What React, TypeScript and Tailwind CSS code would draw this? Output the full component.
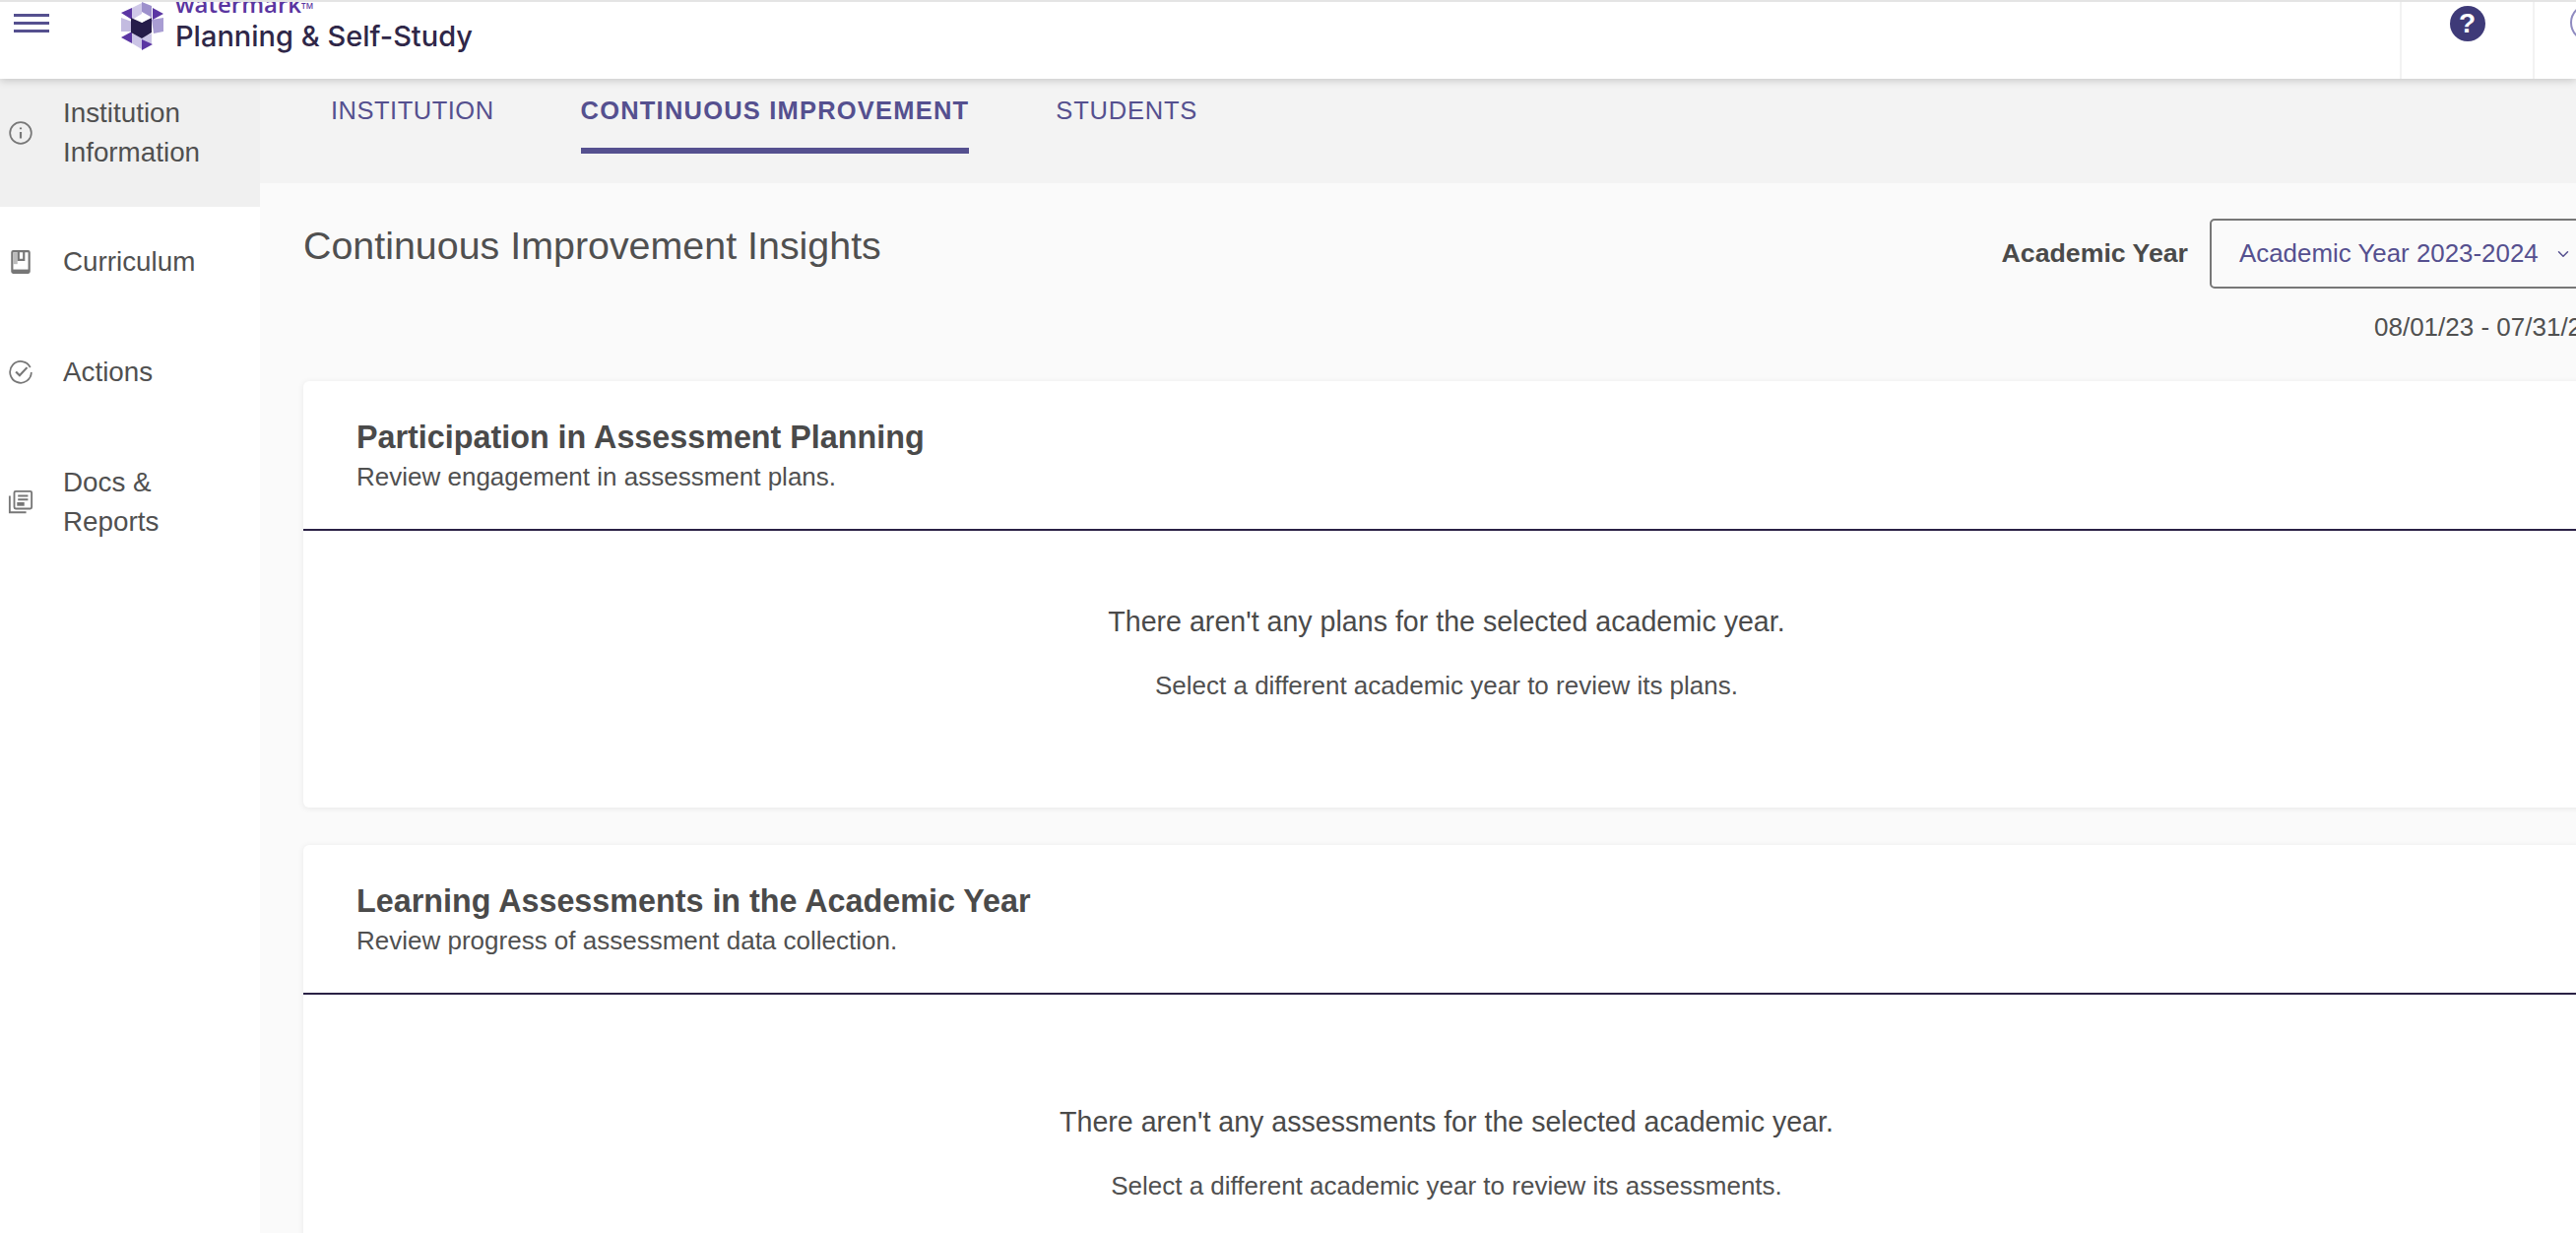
import { ChevronDown } from "lucide-react";

const font = "font-['Liberation_Sans',Arial,sans-serif]";

const Logo = () => (
  <svg viewBox="0 0 56 56" className="w-[56px] h-[56px]">
    <polygon points="28,2 38,6 38,18 28,14" fill="#9d90cc" />
    <polygon points="18,8 28,3 28,14 18,20" fill="#cfc8e8" />
    <polygon points="38,20 50,18 50,32 40,34" fill="#a99dd3" />
    <polygon points="7,18 18,22 18,32 7,32" fill="#c3bbe0" />
    <polygon points="18,34 28,38 38,34 38,44 28,50 18,44" fill="#cbc4e6" />
    <polygon points="7,13 18,8 18,20" fill="#5b36a3" />
    <polygon points="39,8 50,14 39,20" fill="#5b36a3" />
    <polygon points="7,38 18,32 18,44" fill="#5b36a3" />
    <polygon points="28,40 39,45 28,51" fill="#5b36a3" />
    <polygon points="17,18 28,23 38,18 38,33 28,39 17,33" fill="#261c4a" />
    <polygon points="28,12 37,17 28,23" fill="#ffffff" />
  </svg>
);

const InfoIcon = () => (
  <svg viewBox="0 0 24 24" className="w-[26px] h-[26px]" fill="none" stroke="#777" strokeWidth="1.6">
    <circle cx="12" cy="12" r="10" />
    <path d="M12 11v6M12 7v1.6" strokeWidth="2" />
  </svg>
);

const BookIcon = () => (
  <svg viewBox="0 0 24 24" className="w-[26px] h-[26px]" fill="none" stroke="#777" strokeWidth="2">
    <rect x="4" y="2" width="16" height="20" rx="1" />
    <path d="M4 20.500h16" strokeWidth="3" />
    <path d="M5 3h4v11H5z" fill="#bbb" stroke="none" />
    <path d="M10 2v8h5V2" />
  </svg>
);

const CheckIcon = () => (
  <svg viewBox="0 0 24 24" className="w-[26px] h-[26px]" fill="none" stroke="#777" strokeWidth="1.6">
    <path d="M21 7.500A10 10 0 1 0 22 12" />
    <path d="M7.500 11.500l3.500 3.500 7-7.500" strokeWidth="2" />
  </svg>
);

const DocsIcon = () => (
  <svg viewBox="0 0 28 28" className="w-[28px] h-[28px]" fill="none" stroke="#777" strokeWidth="2">
    <rect x="7" y="2" width="19" height="19" rx="1.500" />
    <path d="M2 7v18h18" />
    <path d="M11 7h11M11 11h11" />
    <path d="M11 15h6v2h-6z" fill="#777" />
  </svg>
);

const navItems = [
  { label: "Institution Information", icon: <InfoIcon />, active: true, box: "h-[130px] pb-[20px]" },
  { label: "Curriculum", icon: <BookIcon />, box: "h-[112px]" },
  { label: "Actions", icon: <CheckIcon />, box: "h-[112px]" },
  { label: "Docs & Reports", icon: <DocsIcon />, box: "h-[112px] pt-[40px]" },
];

const Sidebar = () => (
  <aside className="w-[264px] shrink-0 bg-white">
    {navItems.map((item) => (
      <div
        key={item.label}
        className={`flex items-center gap-[30px] pl-[8px] pr-[20px] ${item.box} ${item.active ? "bg-[#f0f0f0]" : ""}`}
      >
        <span className="shrink-0 w-[26px] flex justify-center">{item.icon}</span>
        <span className="text-[27.800px] leading-[40px] text-[#505050]">{item.label}</span>
      </div>
    ))}
  </aside>
);

const Card = ({
  title,
  subtitle,
  empty,
  hint,
  body,
}: {
  title: string;
  subtitle: string;
  empty: string;
  hint: string;
  body: string;
}) => (
  <section className="h-[433px] bg-white rounded-[6px] shadow-[0_1px_6px_rgba(0,0,0,0.08)]">
    <div className="h-[152px] pl-[54px] pt-[38px] border-b-2 border-[#2a2145]">
      <h2 className="text-[32.300px] leading-[38px] font-bold text-[#4a4a4a]">{title}</h2>
      <p className="text-[26px] leading-[28px] text-[#505050] mt-[7px]">{subtitle}</p>
    </div>
    <div className={`text-center ${body}`}>
      <p className="text-[28.600px] leading-[36px] text-[#4a4a4a]">{empty}</p>
      <p className="text-[26px] leading-[32px] text-[#505050] mt-[31px]">{hint}</p>
    </div>
  </section>
);

export default function App() {
  return (
    <div className={`w-[2616px] h-[1252px] overflow-hidden bg-white ${font}`}>
      <header className="relative z-10 h-[80px] bg-white border-t-2 border-[#e4e4e4] shadow-[0_2px_8px_rgba(0,0,0,0.18)] flex overflow-hidden">
        <div className="w-[116px] pl-[14px] pt-[12px] shrink-0">
          <div className="w-[36px] flex flex-col gap-[5px]">
            <div className="h-[3px] bg-[#55508f]" />
            <div className="h-[3px] bg-[#55508f]" />
            <div className="h-[3px] bg-[#55508f]" />
          </div>
        </div>
        <div className="-mt-[2px]">
          <Logo />
        </div>
        <div className="ml-[6px] -mt-[12px]">
          <div className="font-['Open_Sans',sans-serif] text-[24px] leading-[28px] font-semibold text-[#5a35a0]">
            watermark<sup className="text-[8px]">TM</sup>
          </div>
          <div className="font-['Inter',sans-serif] text-[29px] leading-[38px] font-medium text-[#2f2748]">Planning &amp; Self-Study</div>
        </div>
        <div className="ml-auto flex">
          <div className="w-[137px] border-x-2 border-[#f2f2f2] flex justify-center pt-[4px]">
            <div className="w-[36px] h-[36px] rounded-full bg-[#3e3a78] text-white text-[28px] leading-[36px] font-bold text-center">?</div>
          </div>
          <div className="w-[42px] pl-[36px] pt-[2px]">
            <div className="w-[38px] h-[38px] rounded-full border-2 border-[#8f8bc0]" />
          </div>
        </div>
      </header>
      <div className="flex h-[1172px]">
        <Sidebar />
        <main className="w-[2420px] shrink-0 bg-[#fafafa]">
          <nav className="h-[106px] bg-[#f3f3f3] pl-[72px] flex gap-[88px]">
            <div className="h-[76px] pt-[16px] text-[25.500px] leading-[32px] tracking-[0.5px] text-[#55508f]">INSTITUTION</div>
            <div className="h-[76px] pt-[16px] text-[25.500px] leading-[32px] font-bold tracking-[1.2px] text-[#55508f] border-b-[6px] border-[#55508f]">CONTINUOUS IMPROVEMENT</div>
            <div className="h-[76px] pt-[16px] text-[25.500px] leading-[32px] tracking-[0.8px] text-[#55508f]">STUDENTS</div>
          </nav>
          <div className="pl-[44px] w-[2366px]">
            <div className="flex justify-between pt-[36px] h-[201px]">
              <h1 className="text-[39.400px] leading-[48px] text-[#505050] mt-[3px]">Continuous Improvement Insights</h1>
              <div className="flex flex-col items-end -mr-[10px]">
                <div className="flex items-center">
                  <span className="text-[26.700px] font-bold text-[#4a4a4a] mr-[22px]">Academic Year</span>
                  <div className="w-[396px] h-[71px] border-2 border-[#777] rounded-[5px] flex items-center pl-[28px] text-[25.900px] text-[#55508f]">
                    Academic Year 2023-2024
                    <ChevronDown className="ml-[16px] w-[18px] h-[18px]" />
                  </div>
                </div>
                <div className="text-[26px] text-[#505050] mt-[20px] w-[229px] whitespace-nowrap">08/01/23 - 07/31/24</div>
              </div>
            </div>
            <div className="flex flex-col gap-[38px]">
              <Card
                title="Participation in Assessment Planning"
                subtitle="Review engagement in assessment plans."
                empty="There aren't any plans for the selected academic year."
                hint="Select a different academic year to review its plans."
                body="pt-[74px]"
              />
              <Card
                title="Learning Assessments in the Academic Year"
                subtitle="Review progress of assessment data collection."
                empty="There aren't any assessments for the selected academic year."
                hint="Select a different academic year to review its assessments."
                body="pt-[111px]"
              />
            </div>
          </div>
        </main>
      </div>
    </div>
  );
}
